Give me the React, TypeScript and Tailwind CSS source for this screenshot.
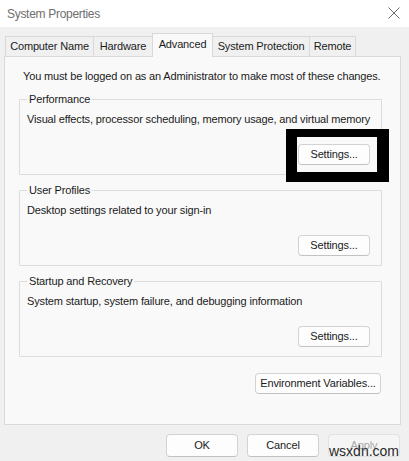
import React from 'react';

const FONT = { fontFamily: '"Liberation Sans", Arial, sans-serif' };

const tabs = [
  { label: 'Computer Name', w: 'w-[88px]' },
  { label: 'Hardware', w: 'w-[59px]' },
  { label: 'Advanced', w: 'w-[61px]', active: true },
  { label: 'System Protection', w: 'w-[96px]' },
  { label: 'Remote', w: 'w-[47px]', last: true },
];

function WinButton({ children, className = '', disabled = false }: { children: React.ReactNode; className?: string; disabled?: boolean }) {
  return (
    <button
      className={
        'flex items-center justify-center whitespace-nowrap rounded-[4px] border leading-none ' +
        (disabled
          ? 'border-[#e2e2e2] bg-[#f5f5f5] text-[#a8a8a8] '
          : 'border-[#d3d3d3] border-b-[#c2c2c2] bg-[#fdfdfd] text-[#1b1b1b] ') +
        className
      }
    >
      {children}
    </button>
  );
}

function Group({ title, text }: { title: string; text: string }) {
  return (
    <fieldset className="mt-[7px] rounded-[1px] border border-[#dcdcdc] pb-[9px] pl-[7px] pr-[11px]">
      <legend className="px-[2px] leading-[16px]">{title}</legend>
      <p className="mt-[4px] whitespace-nowrap leading-[16px]">{text}</p>
      <div className="mt-[17px] flex justify-end">
        <WinButton className="h-[21px] w-[72px]">Settings...</WinButton>
      </div>
    </fieldset>
  );
}

export default function App() {
  return (
    <div className="relative h-[461px] w-[409px] overflow-hidden bg-[#f0f0f0] text-[11px] tracking-[-0.15px] text-[#1b1b1b]" style={FONT}>
      {/* Title bar */}
      <div className="flex h-[27px] items-center justify-between bg-white pl-[7px] pr-[9px]">
        <span className="text-[12px] tracking-[-0.3px] text-[#6e6e6e]">System Properties</span>
        <svg width="12" height="12" viewBox="0 0 12 12" className="mt-[-2px]">
          <path d="M0.5 0.5 L11.5 11.5 M11.5 0.5 L0.5 11.5" stroke="#707070" strokeWidth="1" fill="none" />
        </svg>
      </div>

      {/* Tabs */}
      <div className="mt-[6px] flex h-[23px] items-end pl-[5px]">
        {tabs.map((t, i) => {
          const prevActive = i > 0 && tabs[i - 1].active;
          return (
            <div
              key={t.label}
              className={
                'flex items-center justify-center whitespace-nowrap border-t border-[#d9d9d9] ' +
                t.w +
                (t.active
                  ? ' relative z-10 -mb-px h-[24px] border-x bg-[#f9f9f9] pb-[2px]'
                  : ' h-[20px] bg-[#f0f0f0]' + (prevActive ? '' : ' border-l') + (t.last ? ' border-r' : ''))
              }
            >
              {t.label}
            </div>
          );
        })}
      </div>

      {/* Panel */}
      <div className="ml-[4px] h-[369px] w-[397px] border border-[#d9d9d9] bg-[#f9f9f9] pl-[14px] pr-[18px] pt-[11px]">
        <p className="ml-[4px] whitespace-nowrap leading-[16px]">You must be logged on as an Administrator to make most of these changes.</p>
        <Group title="Performance" text="Visual effects, processor scheduling, memory usage, and virtual memory" />
        <Group title="User Profiles" text="Desktop settings related to your sign-in" />
        <Group title="Startup and Recovery" text="System startup, system failure, and debugging information" />
        <div className="mt-[16px] flex justify-end pr-[1px]">
          <WinButton className="h-[21px] w-[126px]">Environment Variables...</WinButton>
        </div>
      </div>

      {/* Dialog buttons */}
      <div className="mt-[9px] flex justify-end gap-[9px] pr-[9px]">
        <WinButton className="h-[23px] w-[72px]">OK</WinButton>
        <WinButton className="h-[23px] w-[72px]">Cancel</WinButton>
        <WinButton className="h-[23px] w-[72px]" disabled>Apply</WinButton>
      </div>

      {/* Highlight frame */}
      <div className="absolute left-[286px] top-[129px] h-[53px] w-[103px] border-b-[10px] border-l-[11px] border-r-[12px] border-t-[8px] border-black" />

      {/* Watermark */}
      <span className="absolute left-[329px] top-[443px] text-[14px] leading-[16px] tracking-normal text-[#2a2a2a]">
        wsxdn.com
      </span>
    </div>
  );
}
